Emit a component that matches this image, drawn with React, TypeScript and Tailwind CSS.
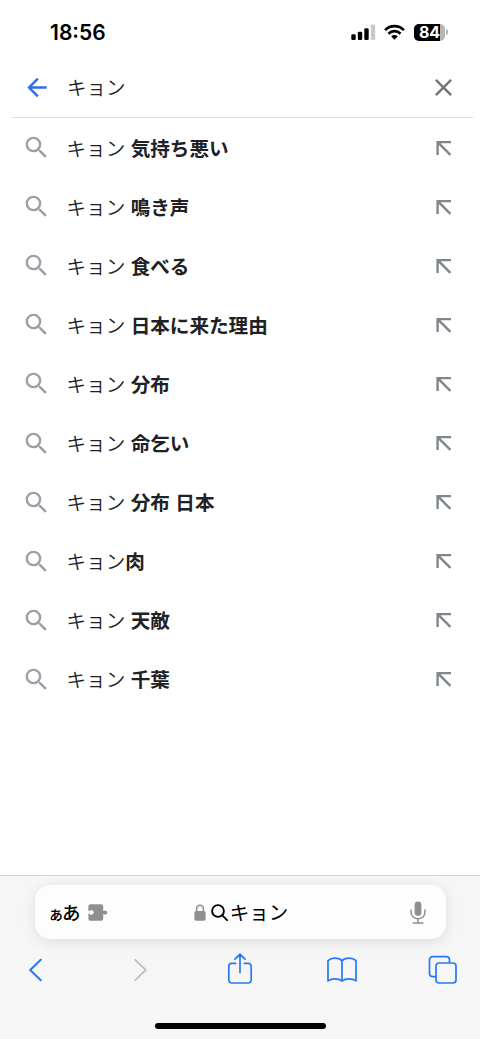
type Suggestion = {
  query: string;
  completion: string;
};

const SUGGESTIONS: Suggestion[] = [
  { query: "キョン ", completion: "気持ち悪い" },
  { query: "キョン ", completion: "鳴き声" },
  { query: "キョン ", completion: "食べる" },
  { query: "キョン ", completion: "日本に来た理由" },
  { query: "キョン ", completion: "分布" },
  { query: "キョン ", completion: "命乞い" },
  { query: "キョン ", completion: "分布 日本" },
  { query: "キョン", completion: "肉" },
  { query: "キョン ", completion: "天敵" },
  { query: "キョン ", completion: "千葉" },
];

function SignalIcon() {
  return (
    <svg width="25" height="17" viewBox="0 0 25 17">
      <rect x="0.3" y="10.2" width="4.4" height="5.8" rx="1.3" />
      <rect x="6.8" y="7.8" width="4.4" height="8.2" rx="1.3" />
      <rect x="13.3" y="4.3" width="4.4" height="11.7" rx="1.3" />
      <rect x="19.8" y="0.5" width="4.4" height="15.5" rx="1.3" fill="#cacaca" />
    </svg>
  );
}

function WifiIcon() {
  return (
    <svg width="21" height="17" viewBox="0 0 21 17" fill="none" stroke="currentColor" strokeWidth="2.7">
      <path d="M1.1 6.1a13.3 13.3 0 0 1 18.8 0" />
      <path d="M4.5 9.7a8.5 8.5 0 0 1 12 0" />
      <path d="M7.2 12.4a4.7 4.7 0 0 1 6.6 0L10.5 15.8z" fill="currentColor" stroke="none" />
    </svg>
  );
}

function Battery({ level }: { level: number }) {
  return (
    <div className="flex items-center gap-px">
      <div className="relative w-[31px] h-[17px] rounded-[5px] overflow-hidden bg-[#b5b5b5]">
        <div className="h-full bg-black" style={{ width: `${level}%` }} />
        <span className="absolute inset-0 flex items-center justify-center text-[16px] leading-none font-bold text-white">
          {level}
        </span>
      </div>
      <div className="w-[2px] h-[6px] rounded-r-full bg-[#b5b5b5]" />
    </div>
  );
}

function StatusBar() {
  return (
    <div className="h-16 flex items-center justify-between pl-[50px] pr-[32px] font-[Inter] text-black">
      <span className="text-[21px] leading-none font-semibold">18:56</span>
      <div className="flex items-center">
        <SignalIcon />
        <div className="w-[8px]" />
        <WifiIcon />
        <div className="w-[9px]" />
        <Battery level={84} />
      </div>
    </div>
  );
}

function SearchHeader() {
  return (
    <div className="h-[54px] ml-3 mr-[7px] flex items-center pb-[7px] border-b-[1.5px] border-[#dadce0]">
      <button type="button" aria-label="戻る" className="ml-[10px] text-[#2f6de1]">
        <svg width="30" height="29" viewBox="0 0 24 24" fill="currentColor" className="block">
          <path d="M20 11H7.83l5.59-5.59L12 4l-8 8 8 8 1.41-1.41L7.83 13H20v-2z" />
        </svg>
      </button>
      <span className="ml-[15px] flex-1 text-[19.5px] leading-none font-[350] text-[#202124]">キョン</span>
      <button type="button" aria-label="クリア" className="mr-[15px] text-[#70757a]">
        <svg width="29" height="29" viewBox="0 0 24 24" fill="currentColor" className="block">
          <path d="M19 6.41L17.59 5 12 10.59 6.41 5 5 6.41 10.59 12 5 17.59 6.41 19 12 13.41 17.59 19 19 17.59 13.41 12z" />
        </svg>
      </button>
    </div>
  );
}

function SuggestionRow({ query, completion }: Suggestion) {
  return (
    <li className="h-[59.1px] flex items-center pl-[22px] pr-[27px]">
      <svg width="29" height="29" viewBox="0 0 24 24" fill="#9aa0a6">
        <path d="M15.5 14h-.79l-.28-.27A6.471 6.471 0 0 0 16 9.5 6.5 6.5 0 1 0 9.5 16c1.61 0 3.09-.59 4.23-1.57l.27.28v.79l5 4.99L20.49 19l-4.99-5zm-6 0C7.01 14 5 11.99 5 9.5S7.01 5 9.5 5 14 7.01 14 9.5 11.99 14 9.5 14z" />
      </svg>
      <span className="ml-[15.5px] pb-[0.5px] flex-1 whitespace-pre text-[19.6px] leading-none text-[#202124] [word-spacing:1px]">
        <span className="font-[350]">{query}</span>
        <b className="font-bold">{completion}</b>
      </span>
      <svg width="18" height="18" viewBox="0 0 18 18" fill="none" stroke="#80868b" strokeWidth="2.4">
        <path d="M2.6 16V3.100H16M2.900 3.400 15.400 15.900" />
      </svg>
    </li>
  );
}

function PuzzleIcon() {
  return (
    <svg width="21" height="17" viewBox="0 0 21 17" fill="#8e8e93">
      <path d="M2.4 0.300H13.200a2 2 0 0 1 2 2V6.900h1a2 2 0 1 1 0 3.300h-1v4.500a2 2 0 0 1-2 2H2.400a2 2 0 0 1-2-2V9.800h1.200a2.300 2.300 0 1 0 0-2.800H.4V2.300a2 2 0 0 1 2-2z" />
    </svg>
  );
}

function LockIcon() {
  return (
    <svg width="12" height="17" viewBox="0 0 12 17">
      <rect x="0.4" y="7" width="11.2" height="9.700" rx="1.800" fill="#8e8e93" />
      <path d="M2.600 8V4.600a3.400 3.400 0 0 1 6.800 0V8" fill="none" stroke="#8e8e93" strokeWidth="1.6" />
    </svg>
  );
}

function MicIcon() {
  return (
    <svg width="16" height="23" viewBox="0 0 16 23" fill="none" stroke="#8e8e93" strokeWidth="1.5" strokeLinecap="round">
      <rect x="4.6" y="0.4" width="6.8" height="14.4" rx="3.4" fill="#8e8e93" stroke="none" />
      <path d="M1.1 9v2.6a6.9 6.2 0 0 0 13.8 0V9M8 18v3.9M3.2 21.9h9.6" />
    </svg>
  );
}

function AddressBar() {
  return (
    <div className="mx-[34.5px] mt-[9px] h-[54px] flex items-center justify-between rounded-[15px] bg-[#fdfdfd] pl-[15px] pr-[19px] shadow-[0_3px_14px_rgba(0,0,0,0.1)]">
      <div className="flex items-center text-black">
        <span className="flex items-baseline w-[32px] leading-none whitespace-nowrap font-medium">
          <span className="text-[16px] -ml-[1.5px] -mr-[2px]">ぁ</span>
          <span className="text-[18.5px]">あ</span>
        </span>
        <div className="w-[6px]" />
        <PuzzleIcon />
      </div>
      <div className="flex items-center pr-[37px] text-black">
        <LockIcon />
        <svg width="17" height="17" viewBox="0 0 17 17" fill="none" stroke="currentColor" strokeWidth="1.9" className="ml-[5px]">
          <circle cx="7" cy="7" r="5.9" />
          <path d="m11.3 11.3 4.8 4.8" strokeLinecap="round" />
        </svg>
        <span className="ml-[2px] text-[19.5px] leading-none">キョン</span>
      </div>
      <MicIcon />
    </div>
  );
}

function Toolbar() {
  return (
    <div className="h-[62px] flex items-center justify-between pl-[28px] pr-[22px] text-[#2878f5]">
      <svg width="14" height="24" viewBox="0 0 14 24" fill="none" stroke="currentColor" strokeWidth="2" strokeLinecap="round" strokeLinejoin="round">
        <path d="M12.8 1.8 2.2 12l10.6 10.2" />
      </svg>
      <svg width="14" height="24" viewBox="0 0 14 24" fill="none" stroke="#bfbfc1" strokeWidth="1.8" strokeLinecap="round" strokeLinejoin="round" className="ml-[20px]">
        <path d="M1.2 1.8 11.8 12 1.2 22.2" />
      </svg>
      <svg width="26" height="34" viewBox="0 0 26 34" fill="none" stroke="currentColor" strokeWidth="1.7" strokeLinecap="round" strokeLinejoin="round" className="ml-[8px] -mt-[2px]">
        <path d="M8.6 11.4H4.8a3 3 0 0 0-3 3V28a3 3 0 0 0 3 3h16.4a3 3 0 0 0 3-3V14.4a3 3 0 0 0-3-3h-3.8M13 20.5V2.3M8 7.1l5-4.9 5 4.9" />
      </svg>
      <svg width="30" height="26" viewBox="0 0 30 26" fill="none" stroke="currentColor" strokeWidth="1.7" strokeLinecap="round" strokeLinejoin="round" className="ml-[2px]">
        <path d="M15 3.8C11.5.3 4.4.4 1 3.7v20.2c3.9-2.6 10.4-2.7 14 .2 3.600-2.900 10.100-2.800 14-.2V3.700C25.600.4 18.500.3 15 3.800zM15 3.800v20.300" />
      </svg>
      <svg width="30" height="30" viewBox="0 0 30 30" fill="none" stroke="currentColor" strokeWidth="1.7" strokeLinejoin="round">
        <path d="M8 21.700H4.500a3 3 0 0 1-3-3V4.700a3 3 0 0 1 3-3h14a3 3 0 0 1 3 3V7.900" />
        <rect x="8" y="8" width="20" height="20" rx="3" />
      </svg>
    </div>
  );
}

export default function App() {
  return (
    <div
      lang="ja"
      className="w-[480px] h-[1039px] flex flex-col overflow-hidden bg-white font-['Noto_Sans_CJK_JP',sans-serif]"
    >
      <StatusBar />
      <SearchHeader />
      <ul className="flex-1">
        {SUGGESTIONS.map((s) => (
          <SuggestionRow key={s.completion} {...s} />
        ))}
      </ul>
      <div className="h-[164px] flex flex-col border-t border-[#d5d5d6] bg-[#f6f6f6]">
        <AddressBar />
        <Toolbar />
        <div className="mt-[22px] mx-auto w-[171px] h-[6px] rounded-full bg-black" />
      </div>
    </div>
  );
}
